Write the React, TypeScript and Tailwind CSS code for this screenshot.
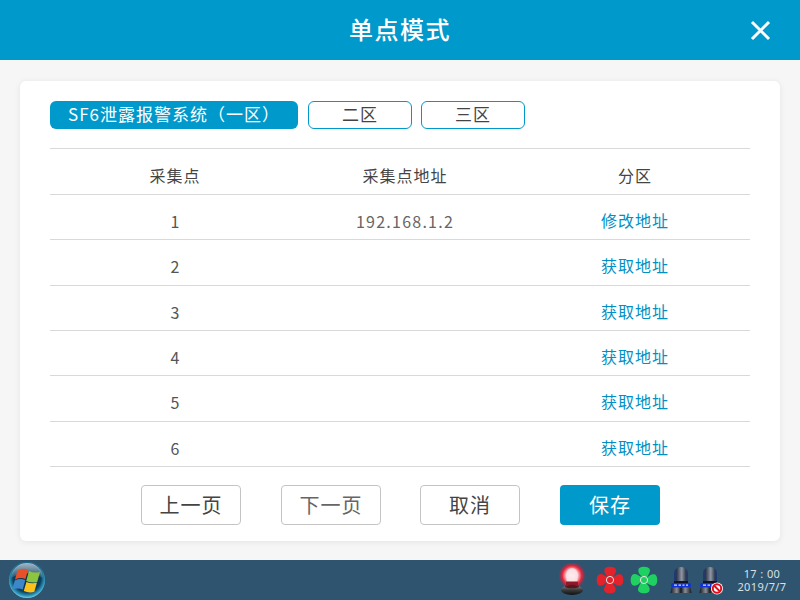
const FONT = "font-['Noto_Sans_CJK_SC','Noto_Sans',sans-serif]";
const rows = [
  ["1", "192.168.1.2", "修改地址"],
  ["2", "", "获取地址"],
  ["3", "", "获取地址"],
  ["4", "", "获取地址"],
  ["5", "", "获取地址"],
  ["6", "", "获取地址"],
];

function Fan({ color, id }: { color: string; id: string }) {
  return (
    <svg width="28" height="28" viewBox="0 0 28 28" aria-label={id}>
      {[0, 90, 180, 270].map((a) => (
        <path
          key={a}
          d="M14 11.500 C9.500 10 7.300 5.500 8.800 2.600 C10.800 0 18 0 19.600 3 C21 6 18 8.500 17 12 Z"
          fill={color}
          transform={`rotate(${a} 14 14)`}
        />
      ))}
      <circle cx="14" cy="14" r="3.600" fill={color} stroke="#f2e4e4" strokeWidth="1" />
    </svg>
  );
}

function Sensor({ blocked }: { blocked?: boolean }) {
  const g = blocked ? "sb" : "sa";
  return (
    <svg width="26" height="30" viewBox="0 0 26 30">
      <defs>
        <linearGradient id={g} x1="0" x2="1" y1="0" y2="0">
          <stop offset="0" stopColor="#1a3a86" />
          <stop offset="0.2" stopColor="#30384a" />
          <stop offset="0.55" stopColor="#8f98a6" />
          <stop offset="0.85" stopColor="#30384a" />
          <stop offset="1" stopColor="#1a3a86" />
        </linearGradient>
        <linearGradient id={`${g}b`} x1="0" x2="1" y1="0" y2="0">
          <stop offset="0" stopColor="#15181e" />
          <stop offset="0.3" stopColor="#8a8f98" />
          <stop offset="0.5" stopColor="#15181e" />
          <stop offset="0.7" stopColor="#8a8f98" />
          <stop offset="1" stopColor="#15181e" />
        </linearGradient>
      </defs>
      <path d="M6 18V8a7 6 0 0 1 14 0v10z" fill={`url(#${g})`} />
      <rect x="6" y="16" width="14" height="2" fill="#0e1626" />
      <rect x="3" y="18" width="20" height="4.500" rx="2" fill="#1230d8" />
      <path d="M6 20.200h3M10.500 20.200h2.500M14.500 20.200h2M18 20.200h2" stroke="#d6e0ff" strokeWidth="1.200" />
      <path d="M3.500 22.500h19l1 5.500H2.500z" fill={`url(#${g}b)`} />
      {blocked && (
        <g>
          <circle cx="20" cy="23.500" r="6" fill="#fff" />
          <circle cx="20" cy="23.500" r="4.200" fill="none" stroke="#e01020" strokeWidth="2" />
          <path d="M17 20.500l6 6" stroke="#e01020" strokeWidth="2" />
        </g>
      )}
    </svg>
  );
}

function Alarm() {
  return (
    <svg width="30" height="34" viewBox="0 0 30 34">
      <defs>
        <radialGradient id="glow" cx="0.5" cy="0.5" r="0.5">
          <stop offset="0" stopColor="#ffffff" />
          <stop offset="0.42" stopColor="#fbd0d4" />
          <stop offset="0.72" stopColor="#e8243a" />
          <stop offset="1" stopColor="#c8203a" stopOpacity="0" />
        </radialGradient>
        <linearGradient id="base" x1="0" x2="0" y1="0" y2="1">
          <stop offset="0" stopColor="#8a8a8a" />
          <stop offset="0.5" stopColor="#3a3a3a" />
          <stop offset="1" stopColor="#101010" />
        </linearGradient>
      </defs>
      <circle cx="15" cy="12.500" r="13.500" fill="url(#glow)" />
      <path d="M9.500 21V11a5.500 6 0 0 1 11 0v10z" fill="#fbe6e8" opacity="0.7" />
      <path d="M9 18.500h12v4H9z" fill="#8c1828" />
      <ellipse cx="15" cy="27" rx="11" ry="5" fill="url(#base)" />
      <ellipse cx="15" cy="23.500" rx="7" ry="1.800" fill="#5a1620" />
    </svg>
  );
}

function WinOrb() {
  return (
    <svg width="38" height="38" viewBox="0 0 38 38">
      <defs>
        <radialGradient id="orb" cx="0.5" cy="0.45" r="0.55">
          <stop offset="0" stopColor="#0a2c48" />
          <stop offset="0.7" stopColor="#0d3f60" />
          <stop offset="0.9" stopColor="#2d9cc0" />
          <stop offset="1" stopColor="#78d0e2" />
        </radialGradient>
        <linearGradient id="shine" x1="0" x2="0" y1="0" y2="1">
          <stop offset="0" stopColor="#dfeaf2" stopOpacity="0.7" />
          <stop offset="1" stopColor="#ffffff" stopOpacity="0.08" />
        </linearGradient>
      </defs>
      <circle cx="19" cy="19" r="18" fill="url(#orb)" />
      <path d="M3 17a16 15 0 0 1 32 0q-16-9-32 0z" fill="url(#shine)" />
      <path d="M9.500 9.500q5-3 10.500-.5l-2.500 9q-5-2-10.500 .5z" fill="#e8502a" />
      <path d="M21 10q5 2.500 11 1l-2.800 10q-5.500 1.500-11-1z" fill="#8cc63f" />
      <path d="M6.800 19.500q5-2.500 10.500-.5l-2.600 9.500q-5-2-10.700 .5z" fill="#3d86c8" />
      <path d="M18.400 21q5 2 10.500 .8l-2.600 9q-5.500 1.500-10.500-.8z" fill="#fcc21a" />
    </svg>
  );
}

export default function App() {
  return (
    <div className={`w-[800px] h-[600px] bg-[#f6f6f6] flex flex-col overflow-hidden ${FONT}`}>
      <header className="h-[60px] shrink-0 bg-[#0099cc] relative flex items-center justify-center">
        <h1 className="text-2xl leading-none font-medium text-white tracking-[1.5px] pb-[3px]">单点模式</h1>
        <svg className="absolute left-[750px] top-[20px]" width="21" height="21" viewBox="0 0 21 21">
          <path d="M2 2l17 17M19 2L2 19" stroke="#fff" strokeWidth="3" />
        </svg>
      </header>

      <main className="flex-1 px-5 pt-[21px] pb-[19px]">
        <div className="h-[460px] bg-white rounded-md shadow-[0_1px_6px_rgba(0,0,0,0.08)] px-[30px] pt-5">
          <div className="flex h-[28px]">
            <button className="w-[248px] pb-[3px] rounded-md bg-[#0099cc] text-white text-[17px] leading-none tracking-[1px]">SF6泄露报警系统（一区）</button>
            <button className="ml-[10px] w-[104px] pb-[3px] rounded-md border border-[#0099cc] text-[#444] text-[17px] leading-none tracking-[1px]">二区</button>
            <button className="ml-[9px] w-[104px] pb-[3px] rounded-md border border-[#0099cc] text-[#444] text-[17px] leading-none tracking-[1px]">三区</button>
          </div>

          <div className="mt-[19px] border-t border-[#d9d9d9]">
            <div className="grid grid-cols-[250px_210px_240px] h-[46px] pt-[7px] border-b border-[#d9d9d9] items-center text-center text-base text-[#444] tracking-[1px]">
              <span>采集点</span>
              <span>采集点地址</span>
              <span className="pl-[10px]">分区</span>
            </div>
            {rows.map(([n, ip, act]) => (
              <div key={n} className="grid grid-cols-[250px_210px_240px] h-[45.33px] pt-[8px] border-b border-[#d9d9d9] items-center text-center text-base tracking-[1px]">
                <span className="pl-[1px] text-[#555]">{n}</span>
                <span className="text-[#666] tracking-[1.25px]">{ip}</span>
                <span className="pl-[10px] pb-[2px] text-[#0090c4]">{act}</span>
              </div>
            ))}
          </div>

          <div className="mt-[18px] flex">
            <button className="ml-[91px] w-[100px] h-10 rounded-sm border border-[#c4c4c4] text-[#444] text-xl tracking-[1px]">上一页</button>
            <button className="ml-[40px] w-[100px] h-10 rounded-sm border border-[#c4c4c4] text-[#666] text-xl tracking-[1px]">下一页</button>
            <button className="ml-[39px] w-[100px] h-10 rounded-sm border border-[#c4c4c4] text-[#444] text-xl tracking-[1px]">取消</button>
            <button className="ml-[40px] w-[100px] h-10 rounded-sm bg-[#0099cc] text-white text-xl tracking-[1px]">保存</button>
          </div>
        </div>
      </main>

      <footer className="h-10 shrink-0 bg-[#2f5470] flex items-center">
        <div className="ml-[8px]"><WinOrb /></div>
        <div className="ml-auto flex items-center">
          <Alarm />
          <div className="ml-[9px]"><Fan color="#e2232c" id="fan-red" /></div>
          <div className="ml-[6px]"><Fan color="#1fd160" id="fan-green" /></div>
          <div className="ml-[10px]"><Sensor /></div>
          <div className="ml-[3px]"><Sensor blocked /></div>
          <div className="w-[62px] mr-[7px] ml-[8px] text-center text-[11px] leading-[13px] tracking-[0.4px] text-[#d8e0e6] font-['Noto_Sans',sans-serif]">
            <div>17 : 00</div>
            <div>2019/7/7</div>
          </div>
        </div>
      </footer>
    </div>
  );
}
